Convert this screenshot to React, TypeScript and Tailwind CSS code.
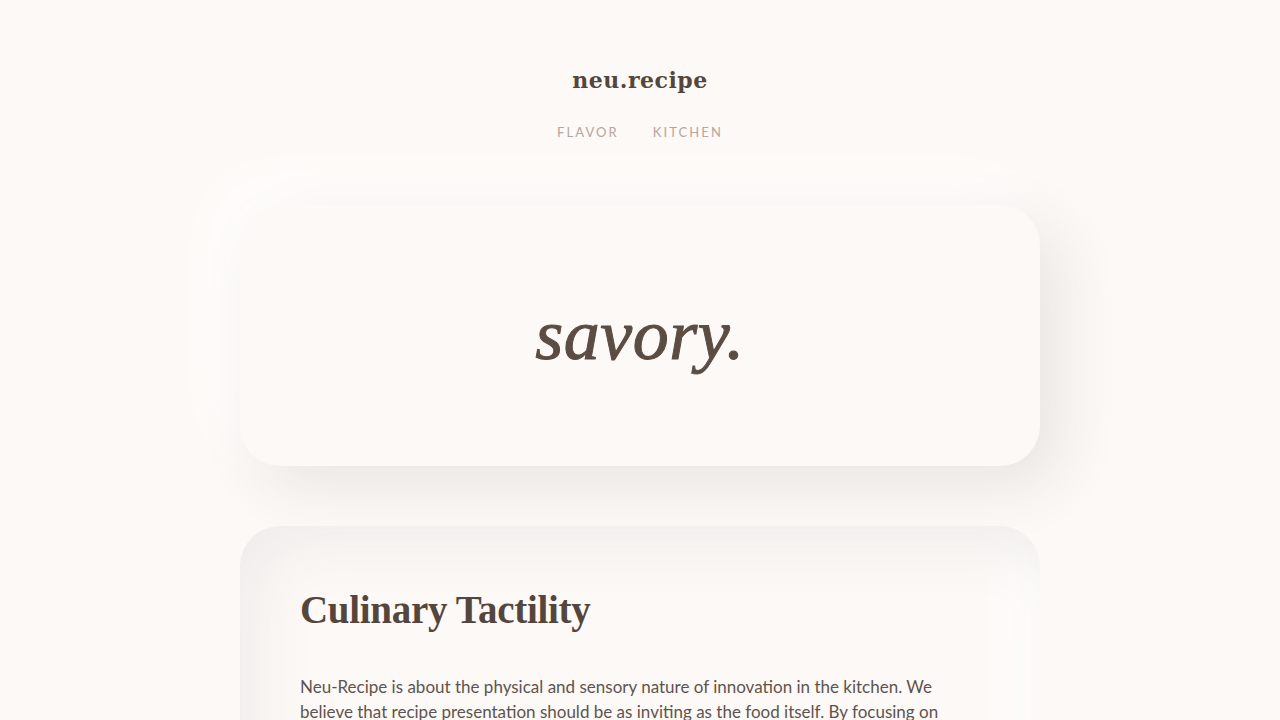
import React from 'react';

const App: React.FC = () => {
  return (
    <div className="min-h-screen bg-[#fdf9f6] text-[#5a4a40]">
      {/* Header */}
      <header className="flex flex-col items-center pt-[62px]">
        <h1 className="font-['DejaVu_Serif',serif] text-[22px] font-bold leading-[36px] tracking-[0.5px] text-[#55463d]">
          neu.recipe
        </h1>
        <nav className="mt-[25px] flex gap-[34px] font-['Lato',sans-serif] text-[13px] tracking-[0.16em] text-[#b3a49c]">
          <a href="#">FLAVOR</a>
          <a href="#">KITCHEN</a>
        </nav>
      </header>

      <main className="mx-auto mt-[62px] flex w-[800px] flex-col gap-[60px] pb-20">
        {/* Hero */}
        <section className="flex h-[261px] items-center justify-center rounded-[40px] bg-[#fdf9f6] shadow-[20px_20px_60px_#e8e5e2,-20px_-20px_60px_#ffffff]">
          <h2 className="font-['Liberation_Serif',serif] text-[72px] italic leading-none tracking-[0.5px] text-[#5b4d44] [-webkit-text-stroke:1px_#5b4d44]">
            savory.
          </h2>
        </section>

        {/* Intro */}
        <section className="rounded-[40px] bg-[#fdf9f6] p-[60px] shadow-[inset_20px_20px_60px_#efedeb,inset_-20px_-20px_60px_#ffffff]">
          <h3 className="font-['Liberation_Serif',serif] text-[39px] font-bold leading-[48px] tracking-[-0.3px] text-[#55463d]">
            Culinary Tactility
          </h3>
          <p className="mt-[40px] w-[660px] font-['Lato',sans-serif] text-[17px] leading-[25px] text-[#5d5450]">
            Neu-Recipe is about the physical and sensory nature of innovation in the kitchen. We
            believe that recipe presentation should be as inviting as the food itself. By focusing on
            soft shapes, warm tones and gentle depth, every page feels like something you could reach
            out and touch.
          </p>
        </section>
      </main>
    </div>
  );
};

export default App;
